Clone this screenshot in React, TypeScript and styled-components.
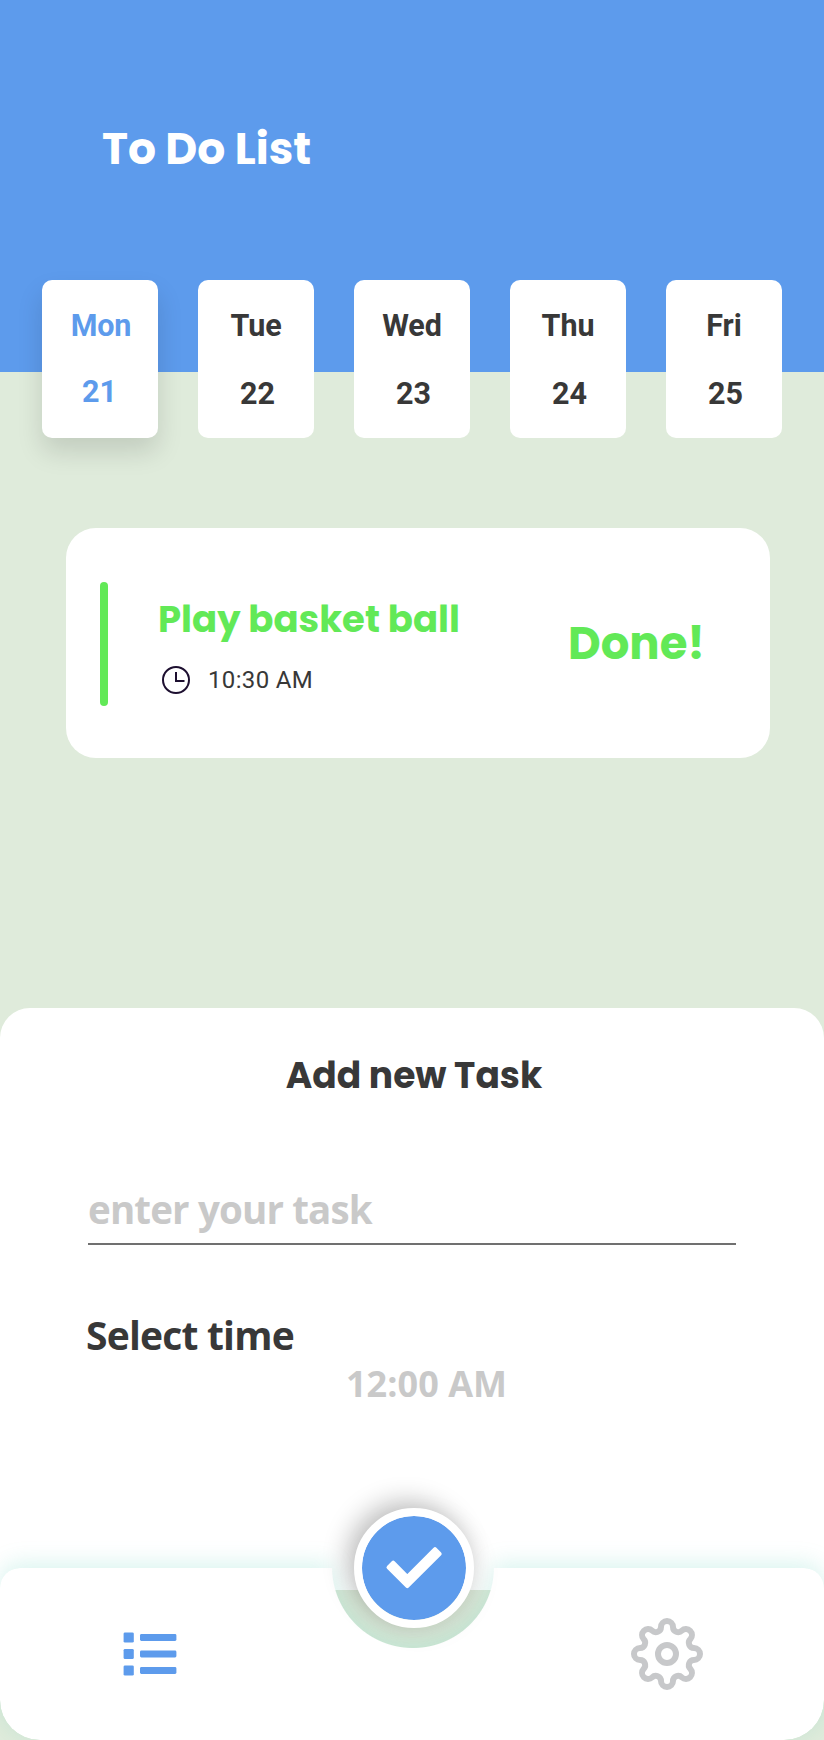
import React from 'react';
import styled, { createGlobalStyle } from 'styled-components';

const blue = '#5d9bec';
const green = '#62e957';
const ink = '#383838';
const display = "Poppins, Inter, sans-serif";
const humanist = "'Segoe UI', 'Open Sans', sans-serif";

const GlobalStyle = createGlobalStyle`
  * { box-sizing: border-box; }
  body { margin: 0; background: #dfebdb; }
`;

const Screen = styled.main`
  display: flex;
  flex-direction: column;
  width: 824px;
  height: 1740px;
  overflow: hidden;
  background: #dfebdb;
  font-family: Roboto, sans-serif;
  color: ${ink};
`;

const Header = styled.header`
  flex: none;
  height: 372px;
  padding: 119px 0 0 102px;
  background: ${blue};
`;

const Title = styled.h1`
  margin: 0;
  font: 700 44px/60px ${display};
  color: #fff;
`;

const Days = styled.nav`
  flex: none;
  display: flex;
  gap: 40px;
  margin-top: -92px;
  padding-left: 42px;
`;

const Day = styled.button<{ $active?: boolean }>`
  display: flex;
  flex-direction: column;
  align-items: center;
  gap: ${p => (p.$active ? 30 : 32)}px;
  width: 116px;
  height: 158px;
  padding: 28px 0 0 ${p => (p.$active ? 2 : 0)}px;
  border: 0;
  border-radius: 10px;
  background: #fff;
  color: ${p => (p.$active ? blue : ink)};
  box-shadow: ${p => (p.$active ? '0 14px 26px rgba(0, 0, 0, 0.13)' : 'none')};
  font: 700 30.5px/36px Roboto, sans-serif;
  letter-spacing: -0.1px;
`;

const DayNumber = styled.span<{ $active?: boolean }>`
  padding-left: ${p => (p.$active ? 0 : 3)}px;
  margin-right: ${p => (p.$active ? 3 : 0)}px;
`;

const TaskCard = styled.article`
  flex: none;
  display: flex;
  width: 704px;
  height: 230px;
  margin: 90px 0 0 66px;
  padding: 54px 65px 0 34px;
  border-radius: 30px;
  background: #fff;
`;

const Accent = styled.div`
  width: 8px;
  height: 124px;
  border-radius: 4px;
  background: ${green};
`;

const TaskBody = styled.div`
  flex: 1;
  padding: 13px 0 0 50px;
`;

const TaskName = styled.h2`
  margin: 0;
  font: 700 37px/48px ${display};
  white-space: nowrap;
  color: ${green};
`;

const TaskTime = styled.div`
  display: flex;
  align-items: center;
  gap: 18px;
  height: 28px;
  margin: 23px 0 0 4px;
  font-size: 24px;
  letter-spacing: 0.35px;
`;

const Status = styled.strong`
  padding-top: 31.5px;
  font: 700 45px/60px ${display};
  color: ${green};
`;

const Sheet = styled.section`
  flex: none;
  display: flex;
  flex-direction: column;
  height: 582px;
  margin-top: 250px;
  padding: 44px 88px 0;
  border-radius: 30px 30px 0 0;
  background: #fff;
`;

const SheetTitle = styled.h2`
  margin: 0 0 0 4px;
  text-align: center;
  font: 700 36px/48px ${display};
`;

const TaskInput = styled.input`
  width: 100%;
  height: 74px;
  margin-top: 71px;
  padding: 3px 0 0;
  border: 0;
  border-bottom: 2px solid #707070;
  outline: 0;
  background: none;
  font: 700 38.5px/54px ${humanist};
  letter-spacing: -0.85px;
  &::placeholder { color: #c9c9c9; opacity: 1; }
`;

const FieldLabel = styled.label`
  margin: 63px 0 0 -2px;
  font: 700 39px/54px ${humanist};
  letter-spacing: -0.8px;
`;

const TimeValue = styled.output`
  align-self: center;
  margin-left: 29px;
  font: 700 36px/44px ${humanist};
  letter-spacing: 0.05px;
  color: #c9c9c9;
`;

const TabBar = styled.nav`
  height: 172px;
  filter: drop-shadow(0 -5px 11px rgba(0, 180, 150, 0.15));
`;

const TabSurface = styled.div`
  display: flex;
  justify-content: space-between;
  align-items: center;
  height: 100%;
  padding: 0 121px 0 123px;
  border-radius: 20px 20px 40px 40px;
  background: #fff;
  mask: radial-gradient(circle at 413px -1px, transparent 80.5px, #000 81.5px);
`;

const TabButton = styled.button`
  display: flex;
  padding: 0;
  border: 0;
  background: none;
`;

const Confirm = styled.button`
  position: absolute;
  left: 354px;
  top: -60px;
  width: 120px;
  height: 120px;
  padding: 0;
  border: 8px solid #fff;
  border-radius: 50%;
  background: ${blue};
  background-clip: padding-box;
  box-shadow: -8px -8px 24px rgba(0, 0, 0, 0.22), 5px 5px 24px rgba(0, 0, 0, 0.08);
`;

const BarWrap = styled.div`
  flex: none;
  position: relative;
  margin-top: -22px;
`;

const ClockIcon = () => (
  <svg width="28" height="28" viewBox="0 0 28 28" fill="none" stroke="#1d0f30" strokeWidth="2">
    <circle cx="14" cy="14" r="13" />
    <path d="M14 6v9h8.5" />
  </svg>
);

const CheckSvg = styled.svg`
  display: block;
`;

const CheckIcon = () => (
  <CheckSvg width="104" height="104" viewBox="8 8 104 104">
    <path
      d="M34.5 59.4 39.2 54.7 53.3 68.8 81 41.1 85.7 45.8 53.3 78.2Z"
      fill="#fff" stroke="#fff" strokeWidth="4" strokeLinejoin="round"
    />
  </CheckSvg>
);

const ListIcon = () => (
  <svg width="54" height="44" viewBox="0 0 54 44" fill={blue}>
    {[5.5, 22, 38.5].map(y => (
      <g key={y}>
        <rect x="0.6" y={y - 5.1} width="10.2" height="10.2" rx="1.4" />
        <rect x="17" y={y - 3.5} width="36.4" height="7" rx="1.4" />
      </g>
    ))}
  </svg>
);

const rotate = (x: number, y: number, deg: number) => {
  const a = (deg * Math.PI) / 180;
  return `${(x * Math.cos(a) - y * Math.sin(a)).toFixed(2)} ${(x * Math.sin(a) + y * Math.cos(a)).toFixed(2)}`;
};

// Eight round teeth joined by round valleys.
const gearPath =
  'M-6 -27' +
  Array.from({ length: 8 }, (_, i) =>
    `A6 6 0 0 1 ${rotate(6, -27, i * 45)}A5.2 5.2 0 0 0 ${rotate(-6, -27, (i + 1) * 45)}`
  ).join('') + 'Z';

const GearIcon = () => (
  <svg width="72" height="72" viewBox="-36 -36 72 72" fill="none" stroke="#c7c8ca" strokeWidth="6">
    <path d={gearPath} />
    <circle r="9" />
  </svg>
);

const days = [
  ['Mon', '21'],
  ['Tue', '22'],
  ['Wed', '23'],
  ['Thu', '24'],
  ['Fri', '25'],
];

export default function App() {
  return (
    <>
      <GlobalStyle />
      <Screen>
        <Header>
          <Title>To Do List</Title>
        </Header>
        <Days>
          {days.map(([name, date], i) => (
            <Day key={name} $active={i === 0}>
              <span>{name}</span>
              <DayNumber $active={i === 0}>{date}</DayNumber>
            </Day>
          ))}
        </Days>
        <TaskCard>
          <Accent />
          <TaskBody>
            <TaskName>Play basket ball</TaskName>
            <TaskTime>
              <ClockIcon />
              10:30 AM
            </TaskTime>
          </TaskBody>
          <Status>Done!</Status>
        </TaskCard>
        <Sheet>
          <SheetTitle>Add new Task</SheetTitle>
          <TaskInput placeholder="enter your task" />
          <FieldLabel>Select time</FieldLabel>
          <TimeValue>12:00 AM</TimeValue>
        </Sheet>
        <BarWrap>
          <TabBar>
            <TabSurface>
              <TabButton aria-label="Tasks"><ListIcon /></TabButton>
              <TabButton aria-label="Settings"><GearIcon /></TabButton>
            </TabSurface>
          </TabBar>
          <Confirm aria-label="Confirm"><CheckIcon /></Confirm>
        </BarWrap>
      </Screen>
    </>
  );
}
